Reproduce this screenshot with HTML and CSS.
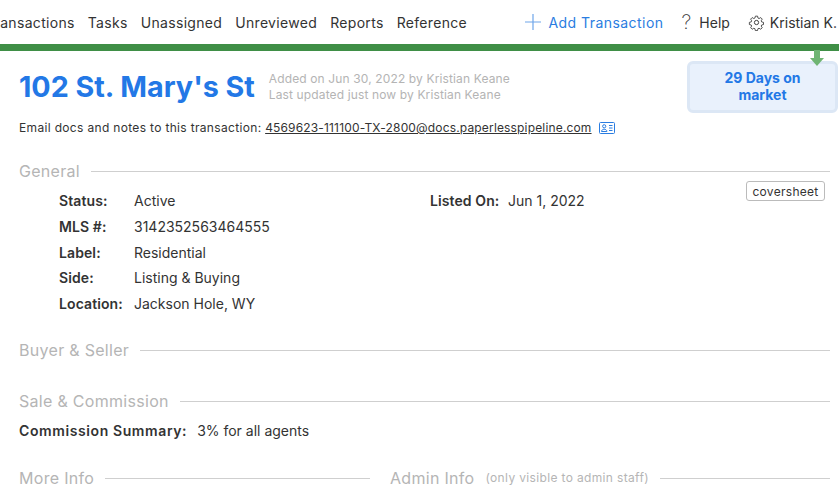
FILE: index.html
```html
<!DOCTYPE html>
<html lang="en">
<head>
<meta charset="utf-8">
<title>102 St. Mary's St</title>
<link rel="stylesheet" href="styles.css">
</head>
<body>
<header class="topbar">
  <nav class="nav-main">
    <a class="nav-clip">Transactions</a>
    <a>Tasks</a>
    <a>Unassigned</a>
    <a>Unreviewed</a>
    <a>Reports</a>
    <a>Reference</a>
  </nav>
  <nav class="nav-side">
    <a class="nav-add">
      <svg class="ico-plus" viewBox="0 0 16 16"><path d="M8 0v16M0 8h16"/></svg>
      Add Transaction
    </a>
    <a class="nav-help"><span class="help-mark">?</span>Help</a>
    <a class="nav-user">
      <svg class="ico-gear" viewBox="0 0 24 24"><circle cx="12" cy="12" r="3"/><path d="M10.3 2h3.4l.6 3 1.7.8 2.7-1.5 2.3 2.4-1.6 2.6.7 1.8 2.9.7v3.4l-2.9.7-.7 1.7 1.6 2.6-2.4 2.4-2.6-1.6-1.7.7-.7 3h-3.4l-.7-3-1.7-.7-2.6 1.6-2.4-2.4 1.6-2.6-.7-1.7-2.9-.7v-3.4l2.9-.7.7-1.8-1.6-2.6 2.4-2.4 2.6 1.5 1.7-.8z" transform="translate(1.2 1.2) scale(.9)"/></svg>
      Kristian K.
    </a>
  </nav>
</header>
<div class="greenbar"></div>
<main class="page">
  <div class="hero">
    <h1>102 St. Mary's St</h1>
    <div class="meta">
      <div>Added on Jun 30, 2022 by Kristian Keane</div>
      <div>Last updated just now by Kristian Keane</div>
    </div>
    <div class="days">
      <svg class="days-arrow" viewBox="0 0 14 16"><path d="M4 0h6v8h4l-7 8-7-8h4z"/></svg>
      29 Days on market
    </div>
  </div>
  <p class="email">Email docs and notes to this transaction: <a>4569623-111100-TX-2800@docs.paperlesspipeline.com</a>
    <svg class="ico-card" viewBox="0 0 16 12"><rect x=".5" y=".5" width="15" height="11" rx="1"/><circle cx="5.2" cy="4.3" r="1.6"/><path d="M2.5 9.5c0-3 5.4-3 5.4 0zM10 3.5h3.5M10 6h3.5M10 8.5h3.5"/></svg>
  </p>

  <section class="sec sec-general">
    <h2 class="rule"><span>General</span></h2>
    <div class="general">
      <dl class="fields">
        <dt>Status:</dt><dd>Active</dd>
        <dt>MLS #:</dt><dd>3142352563464555</dd>
        <dt>Label:</dt><dd>Residential</dd>
        <dt>Side:</dt><dd>Listing &amp; Buying</dd>
        <dt>Location:</dt><dd>Jackson Hole, WY</dd>
      </dl>
      <dl class="fields fields-right">
        <dt>Listed On:</dt><dd>Jun 1, 2022</dd>
      </dl>
      <button class="coversheet">coversheet</button>
    </div>
  </section>

  <section class="sec sec-buyer">
    <h2 class="rule"><span>Buyer &amp; Seller</span></h2>
  </section>

  <section class="sec sec-sale">
    <h2 class="rule"><span>Sale &amp; Commission</span></h2>
    <p class="commission"><b>Commission Summary:</b> 3% for all agents</p>
  </section>

  <section class="sec sec-bottom">
    <h2 class="rule rule-more"><span>More Info</span></h2>
    <h2 class="rule rule-admin"><span>Admin Info</span><small>(only visible to admin staff)</small></h2>
  </section>
</main>
</body>
</html>
```
FILE: styles.css
```css
* { box-sizing: border-box; }
html, body { margin: 0; height: 500px; overflow: hidden; background: #fff; }
body { font-family: Inter, "Liberation Sans", sans-serif; color: #333; font-size: 14px; }

.topbar { height: 44px; display: flex; align-items: center; justify-content: space-between; white-space: nowrap; padding-right: 2px; overflow: hidden; }
.nav-main { display: flex; gap: 13px; margin-left: -14px; font-size: 14px; letter-spacing: .32px; }
.nav-side { display: flex; align-items: center; gap: 18px; }
.nav-add { color: #2a7de1; display: flex; align-items: center; gap: 7px; letter-spacing: .45px; }
.ico-plus { width: 16px; height: 16px; fill: none; stroke: #6ea6ea; stroke-width: 1.2; }
.nav-help { display: flex; align-items: center; gap: 8px; }
.help-mark { font-size: 20px; font-weight: 200; }
.nav-user { display: flex; align-items: center; gap: 5px; }
.ico-gear { width: 17px; height: 17px; fill: none; stroke: #333; stroke-width: 1.3; }

.greenbar { height: 7px; background: #3f8f46; }

.page { padding: 0 9px 0 19px; }
.hero { display: flex; align-items: flex-start; height: 62px; }
h1 { margin: 17px 14px 0 0; font-size: 28.7px; line-height: 38px; font-weight: 700; color: #2378e6; white-space: nowrap; }
.meta { margin-top: 20px; font-size: 12px; line-height: 16px; letter-spacing: .13px; color: #b4b4b4; white-space: nowrap; }
.days { position: relative; margin: 10px -8px 0 auto; width: 151px; height: 52px; padding: 5px 20px; border: 3px solid #dce7f5; border-radius: 6px; background: #e9f1fc; color: #2378e6; font-weight: 700; font-size: 14px; line-height: 17px; text-align: center; }
.days-arrow { position: absolute; top: -14px; right: 11px; width: 14px; height: 16px; fill: #6fb573; }

.email { margin: 6px 0 0; font-size: 12px; line-height: 18px; letter-spacing: .33px; color: #333; white-space: nowrap; }
.email a { text-decoration: underline; margin-left: 0; letter-spacing: .16px; }
.ico-card { width: 16px; height: 12px; margin-left: 4px; vertical-align: -2px; fill: none; stroke: #2a7de1; stroke-width: 1; }

.rule { display: flex; align-items: center; gap: 11px; margin: 0; font-size: 16px; line-height: 22px; font-weight: 400; letter-spacing: .3px; color: #b5b5b5; white-space: nowrap; }
.rule::after { content: ""; flex: 1; height: 1px; background: #cfcfcf; }
.rule small { font-size: 12px; letter-spacing: .35px; color: #b5b5b5; }

.sec-general { margin-top: 23px; }
.general { display: flex; align-items: flex-start; padding: 6px 5px 0 40px; }
.fields { display: grid; grid-template-columns: 75px auto; grid-auto-rows: 25.7px; align-items: center; margin: 0; width: 371px; }
.fields-right { grid-template-columns: 78px auto; width: auto; flex: 1; }
dt { font-weight: 600; font-size: 14px; letter-spacing: .1px; }
dd { margin: 0; font-size: 14px; }
.coversheet { margin-top: -7px; height: 20px; width: 79px; padding: 0; border: 1px solid #bbb; border-radius: 3px; background: #fff; color: #333; font: inherit; font-size: 12px; letter-spacing: .3px; }

.sec-buyer { margin-top: 23px; }
.sec-sale { margin-top: 29px; }
.commission { margin: 9px 0 0; font-size: 14px; line-height: 20px; }
.commission b { font-weight: 600; letter-spacing: .6px; margin-right: 6px; }
.sec-bottom { margin-top: 26px; display: flex; gap: 20px; }
.rule-more { width: 351px; }
.rule-admin { flex: 1; }
```
